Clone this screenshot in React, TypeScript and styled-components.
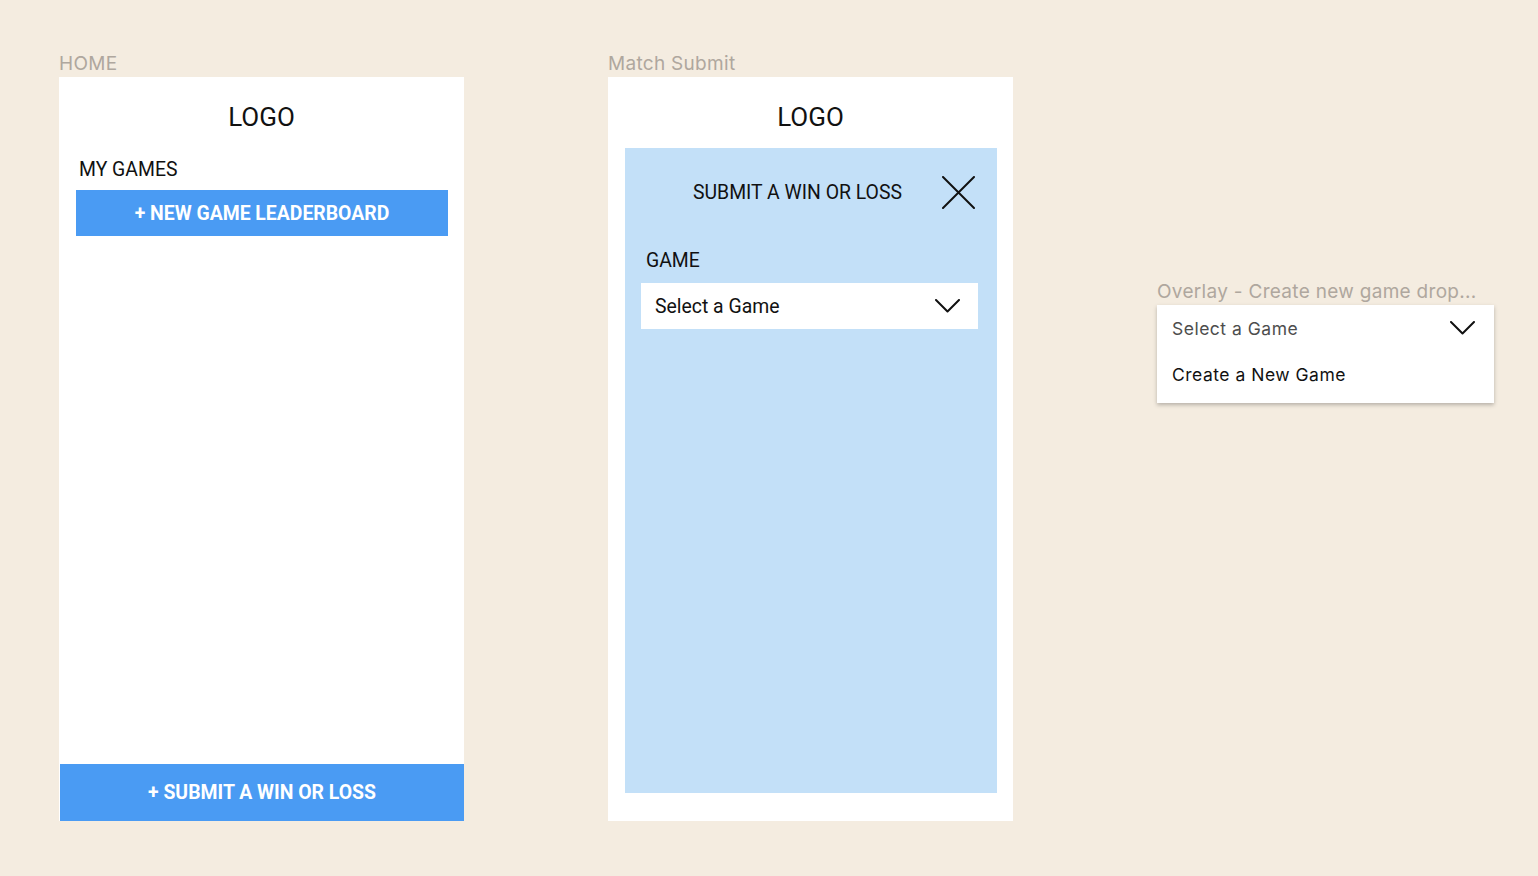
import React from 'react'
import styled, { createGlobalStyle } from 'styled-components'

const colors = {
  canvas: '#f4ece0',
  label: '#afa79e',
  white: '#ffffff',
  black: '#111111',
  blue: '#4a9bf3',
  panel: '#c3e0f8',
  muted: '#4d4d4d',
}

const GlobalStyle = createGlobalStyle`
  html, body {
    margin: 0;
    padding: 0;
    background: ${colors.canvas};
  }

  body {
    font-family: Roboto, 'Liberation Sans', sans-serif;
    color: ${colors.black};
  }
`

const Canvas = styled.main`
  display: flex;
  align-items: flex-start;
  gap: 144px;
  min-height: 876px;
  box-sizing: border-box;
  padding: 52px 0 0 59px;
`

const Column = styled.section<{ $offset?: number }>`
  display: flex;
  flex-direction: column;
  margin-top: ${({ $offset }) => $offset || 0}px;
`

const FrameLabel = styled.div`
  height: 25px;
  font-family: Inter, 'Open Sans', sans-serif;
  font-size: 19px;
  line-height: 23px;
  letter-spacing: 0.3px;
  color: ${colors.label};
  white-space: nowrap;
`

const Frame = styled.div`
  display: flex;
  flex-direction: column;
  width: 405px;
  height: 744px;
  background: ${colors.white};
`

const Logo = styled.div`
  padding-top: 25px;
  font-size: 26px;
  line-height: 30px;
  text-align: center;
`

const SectionTitle = styled.div`
  margin: 27px 0 0 20px;
  font-size: 19.4px;
  line-height: 22px;
`

const PrimaryButton = styled.button<{ $bar?: boolean }>`
  display: flex;
  justify-content: center;
  align-items: center;
  width: ${({ $bar }) => ($bar ? '404px' : '372px')};
  height: ${({ $bar }) => ($bar ? '57px' : '46px')};
  margin: ${({ $bar }) => ($bar ? 'auto 0 0 1px' : '9px 0 0 17px')};
  padding: 0;
  border: none;
  background: ${colors.blue};
  color: ${colors.white};
  font-family: Roboto, 'Liberation Sans', sans-serif;
  font-size: 19.4px;
  font-weight: 700;
  cursor: pointer;
`

const Modal = styled.div`
  display: flex;
  flex-direction: column;
  width: 372px;
  height: 645px;
  margin: 16px 0 0 17px;
  background: ${colors.panel};
`

const ModalHeader = styled.div`
  display: flex;
  justify-content: flex-end;
  align-items: center;
  gap: 40px;
  height: 33px;
  padding: 28px 22px 0 0;
`

const ModalTitle = styled.div`
  font-size: 19.4px;
  line-height: 22px;
`

const CloseButton = styled.button`
  display: flex;
  width: 33px;
  height: 33px;
  padding: 0;
  border: none;
  background: none;
  cursor: pointer;
`

const FieldLabel = styled.div`
  margin: 41px 0 0 21px;
  font-size: 19.4px;
  line-height: 22px;
`

const Select = styled.div`
  display: flex;
  justify-content: space-between;
  align-items: center;
  width: 337px;
  height: 46px;
  box-sizing: border-box;
  margin: 11px 0 0 16px;
  padding: 0 18px 0 14px;
  background: ${colors.white};
  font-size: 19.4px;
`

const Dropdown = styled.div`
  display: flex;
  flex-direction: column;
  width: 337px;
  padding-bottom: 6px;
  background: ${colors.white};
  box-shadow: 0 2px 4px rgba(0, 0, 0, 0.25);
`

const DropdownRow = styled.div<{ $placeholder?: boolean }>`
  display: flex;
  justify-content: space-between;
  align-items: center;
  height: 46px;
  padding: 0 19px 0 15px;
  font-family: Inter, 'Open Sans', sans-serif;
  font-size: 17.5px;
  letter-spacing: 0.5px;
  color: ${({ $placeholder }) => ($placeholder ? colors.muted : colors.black)};
`

const Chevron = () => (
  <svg width="25" height="14" viewBox="0 0 25 14" fill="none">
    <polyline
      points="1,1 12.5,12.5 24,1"
      stroke="#111"
      strokeWidth="2"
      strokeLinecap="round"
      strokeLinejoin="round"
    />
  </svg>
)

const CloseIcon = () => (
  <svg width="33" height="33" viewBox="0 0 33 33" fill="none">
    <path
      d="M1 1 L32 32 M32 1 L1 32"
      stroke="#111"
      strokeWidth="2"
      strokeLinecap="round"
    />
  </svg>
)

const HomeScreen: React.FC = () => (
  <Frame>
    <Logo>LOGO</Logo>
    <SectionTitle>MY GAMES</SectionTitle>
    <PrimaryButton>+ NEW GAME LEADERBOARD</PrimaryButton>
    <PrimaryButton $bar>+ SUBMIT A WIN OR LOSS</PrimaryButton>
  </Frame>
)

const MatchSubmitScreen: React.FC = () => (
  <Frame>
    <Logo>LOGO</Logo>
    <Modal>
      <ModalHeader>
        <ModalTitle>SUBMIT A WIN OR LOSS</ModalTitle>
        <CloseButton aria-label="Close">
          <CloseIcon />
        </CloseButton>
      </ModalHeader>
      <FieldLabel>GAME</FieldLabel>
      <Select>
        <span>Select a Game</span>
        <Chevron />
      </Select>
    </Modal>
  </Frame>
)

const App: React.FC = () => (
  <>
    <GlobalStyle />
    <Canvas>
      <Column>
        <FrameLabel>HOME</FrameLabel>
        <HomeScreen />
      </Column>
      <Column>
        <FrameLabel>Match Submit</FrameLabel>
        <MatchSubmitScreen />
      </Column>
      <Column $offset={228}>
        <FrameLabel>Overlay - Create new game drop...</FrameLabel>
        <Dropdown>
          <DropdownRow $placeholder>
            <span>Select a Game</span>
            <Chevron />
          </DropdownRow>
          <DropdownRow>Create a New Game</DropdownRow>
        </Dropdown>
      </Column>
    </Canvas>
  </>
)

export default App
